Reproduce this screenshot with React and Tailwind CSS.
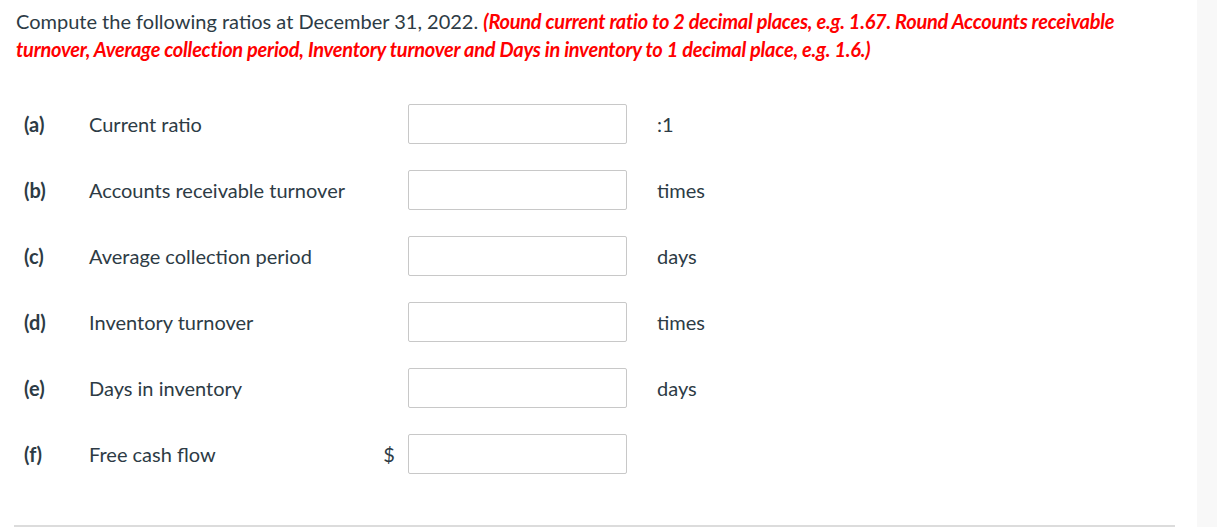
import React from 'react';

const rows = [
    { letter: '(a)', label: 'Current ratio', unit: ':1' },
    { letter: '(b)', label: 'Accounts receivable turnover', unit: 'times' },
    { letter: '(c)', label: 'Average collection period', unit: 'days' },
    { letter: '(d)', label: 'Inventory turnover', unit: 'times' },
    { letter: '(e)', label: 'Days in inventory', unit: 'days' },
    { letter: '(f)', label: 'Free cash flow', unit: '', prefix: '$' },
];

const App = () => {
    return (
        <div className="h-[527px] w-[1217px] bg-white flex overflow-hidden text-[#2d3b45]" style={{ fontFamily: 'Lato, "Liberation Sans", sans-serif' }}>
            {/* --- QUESTION --- */}
            <main className="w-[1197px] flex flex-col">
                <div className="flex-1 pl-4 pt-[7px]">
                    <p className="w-[1110px] text-[20px] leading-[28px]">
                        Compute the following ratios at December 31, 2022.{' '}
                        <span className="text-[#ff0000] font-bold italic tracking-[-0.25px]">
                            (Round current ratio to 2 decimal places, e.g. 1.67. Round Accounts receivable turnover, Average collection period, Inventory turnover and Days in inventory to 1 decimal place, e.g. 1.6.)
                        </span>
                    </p>

                    <div className="mt-[41px] flex flex-col gap-[26px]">
                        {rows.map((r) => (
                            <div key={r.letter} className="flex items-center h-[40px] text-[20px]">
                                <span className="w-[73px] pl-[8px] font-bold">{r.letter}</span>
                                <span className="w-[281px]">{r.label}</span>
                                <span className="w-[38px] text-center">{r.prefix}</span>
                                <div className="w-[219px] h-[40px] border border-[#c8c8c8] rounded-[2px] bg-white"></div>
                                <span className="pl-[30px]">{r.unit}</span>
                            </div>
                        ))}
                    </div>
                </div>
                <div className="ml-[14px] mr-[22px] h-[2px] bg-[#dcdcdc]"></div>
            </main>

            {/* --- SIDE STRIP --- */}
            <aside className="flex-1 bg-[#f8f8f8]"></aside>
        </div>
    );
};

export default App;
